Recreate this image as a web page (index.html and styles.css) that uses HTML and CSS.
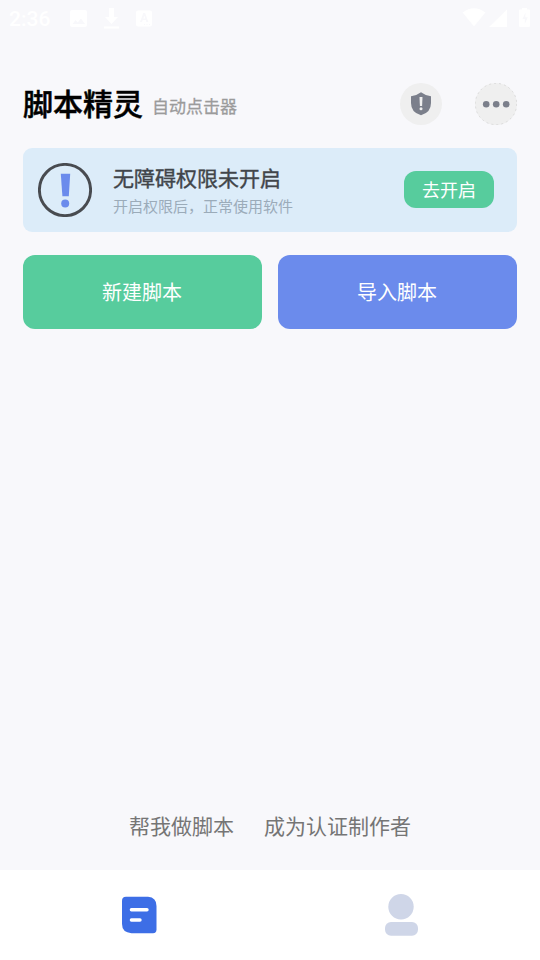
FILE: index.html
```
<!DOCTYPE html>
<html lang="zh-CN">
<head>
<meta charset="utf-8">
<title>脚本精灵</title>
<link rel="stylesheet" href="styles.css">
</head>
<body>
<div class="status">
  <span class="clock">2:36</span>
  <svg class="status-left" width="84" height="22" viewBox="0 0 84 22" fill="#fff">
    <path fill-rule="evenodd" d="M3 2h13q2 0 2 2v13q0 2-2 2H3q-2 0-2-2V4q0-2 2-2zM3.500 16h12.500l-4-5.500-3.300 4-2.200-2.500z"/>
    <path d="M40 0h5v9h4l-6.500 7L36 9h4zM35 18.500h15v2H35z"/>
    <path fill-rule="evenodd" d="M69 2.500h12q2 0 2 2v12q0 2-2 2H69q-2 0-2-2v-12q0-2 2-2zM71 14h2l.7-2h3l.7 2h2l-3.300-9h-1.800zM74.300 10.500l1-3 1 3zM75 16v1h1v-1zM77.500 16v1h1v-1zM80 16v1h1v-1z"/>
  </svg>
  <svg class="status-right" width="70" height="22" viewBox="0 0 70 22" fill="#fff">
    <path d="M2.500 4.500Q14-4 25.500 4.500L14 18.500zM47 1.500v17.500H29z"/>
    <path fill-rule="evenodd" d="M62 0h5v1.500h2q1 0 1 1v15.500q0 1-1 1H60q-1 0-1-1V2.500q0-1 1-1h2zM65.500 4.500L62.500 11h2.300V16l3-6.800h-2.500z"/>
  </svg>
</div>
<header class="header">
  <h1 class="title">脚本精灵</h1>
  <span class="subtitle">自动点击器</span>
  <button class="round shield" aria-label="权限">
    <svg width="42" height="42" viewBox="0 0 42 42"><path fill="#7b7f8b" d="M21 9.300Q25.500 12.800 31 13.200V20Q31 29.500 21 32.200 11 29.500 11 20V13.200Q16.500 12.800 21 9.300z"/><path fill="#efefef" d="M19.500 14h3l-.4 9h-2.200z"/><circle cx="21" cy="25.800" r="1.500" fill="#efefef"/></svg>
  </button>
  <button class="round more" aria-label="更多">
    <svg width="42" height="42" viewBox="0 0 42 42" fill="#7b7f8b"><circle cx="21" cy="21" r="20.700" fill="none" stroke="#d2d2d2" stroke-width=".7" stroke-dasharray="2 3"/><circle cx="11.200" cy="21.200" r="3.300"/><circle cx="21.200" cy="21.200" r="3.300"/><circle cx="31.200" cy="21.200" r="3.300"/></svg>
  </button>
</header>
<main class="main">
  <section class="banner">
    <svg width="54" height="54" viewBox="0 0 54 54"><circle cx="27" cy="27" r="25.600" fill="none" stroke="#484b50" stroke-width="2.900"/><path fill="#6b8bec" d="M22.800 10.800h9.400l-1.400 22.400h-6.400z"/><circle cx="27.200" cy="40.400" r="4" fill="#6b8bec"/></svg>
    <div class="banner-text">
      <strong class="banner-title">无障碍权限未开启</strong>
      <span class="banner-note">开启权限后，正常使用软件</span>
    </div>
    <button class="enable">去开启</button>
  </section>
  <div class="actions">
    <button class="action create">新建脚本</button>
    <button class="action import">导入脚本</button>
  </div>
</main>
<div class="links"><a>帮我做脚本</a><a>成为认证制作者</a></div>
<nav class="tabs">
  <svg class="tab-scripts" width="36" height="38" viewBox="0 0 36 38"><path fill="#3d6ee6" d="M4 .8H26Q34.500 1.500 34.500 10V33.500Q34.500 37.200 31 37.200H9.500Q0 36.500 0 28V5Q0 .8 4 .8z"/><path d="M9.400 13.800H25M9.400 24H18" stroke="#fff" stroke-width="3.400" stroke-linecap="round"/></svg>
  <svg class="tab-user" width="34" height="42" viewBox="0 0 34 42" fill="#cfd6e8"><circle cx="16" cy="12.700" r="12.700"/><rect y="28" width="33" height="13.700" rx="6"/></svg>
</nav>
</body>
</html>
```

FILE: styles.css
```
* { box-sizing: border-box; }

body {
  margin: 0;
  height: 960px;
  display: flex;
  flex-direction: column;
  background: #f8f8fb;
  font-family: "Noto Sans CJK SC", sans-serif;
  overflow: hidden;
}

svg { display: block; flex: none; }

button {
  border: 0;
  padding: 0;
  font-family: inherit;
  color: #fff;
}

.status {
  height: 83px;
  padding: 8px 10px 0 9px;
  display: flex;
  align-items: flex-start;
}

.clock {
  width: 60px;
  color: #fff;
  font: 500 21px/22px Roboto, sans-serif;
}

.status-right { margin-left: auto; }

.header {
  height: 42px;
  padding: 0 23px;
  display: flex;
  align-items: center;
}

.title {
  margin: 0;
  padding-bottom: 4px;
  font-size: 30px;
  line-height: 42px;
  font-weight: 500;
  color: #000;
  -webkit-text-stroke: 0.5px #000;
}

.subtitle {
  margin: 4px 0 0 9px;
  font-size: 17px;
  line-height: 24px;
  color: #9b9b9b;
  -webkit-text-stroke: 0.3px #9b9b9b;
}

.round {
  width: 42px;
  height: 42px;
  border-radius: 50%;
  background: #efefef;
}

.shield { margin-left: auto; }
.more { margin-left: 33px; }

.main { padding: 23px 23px 0; }

.banner {
  height: 84px;
  padding: 0 23px 0 15px;
  display: flex;
  align-items: center;
  border-radius: 9px;
  background: #dcecf9;
}

.banner-text {
  margin-left: 21px;
  padding-top: 1px;
  display: flex;
  flex-direction: column;
}

.banner-title {
  font-size: 21px;
  line-height: 30px;
  font-weight: 400;
  color: #41454a;
  -webkit-text-stroke: 0.4px #41454a;
}

.banner-note {
  padding-top: 1px;
  font-size: 15px;
  line-height: 26px;
  color: #9babb9;
}

.enable {
  width: 90px;
  height: 37px;
  margin: 0 0 1px auto;
  padding-bottom: 2px;
  border-radius: 12px;
  background: #57cc9d;
  font-size: 18px;
}

.actions {
  margin-top: 23px;
  display: grid;
  grid-template-columns: 1fr 1fr;
  gap: 16px;
}

.action {
  height: 74px;
  padding: 0 1px 2px 0;
  border-radius: 12px;
  font-size: 20px;
}

.create { background: #57cc9d; }
.import { background: #6b8bec; }

.links {
  margin-top: auto;
  padding-bottom: 30px;
  display: flex;
  justify-content: center;
  gap: 30px;
  font-size: 21px;
  line-height: 30px;
  color: #757575;
}

.tabs {
  height: 90px;
  display: grid;
  grid-template-columns: 1fr 1fr;
  background: #fff;
}

.tab-scripts { margin: 26px 0 0 122px; }
.tab-user { margin: 24px 0 0 115px; }
```
